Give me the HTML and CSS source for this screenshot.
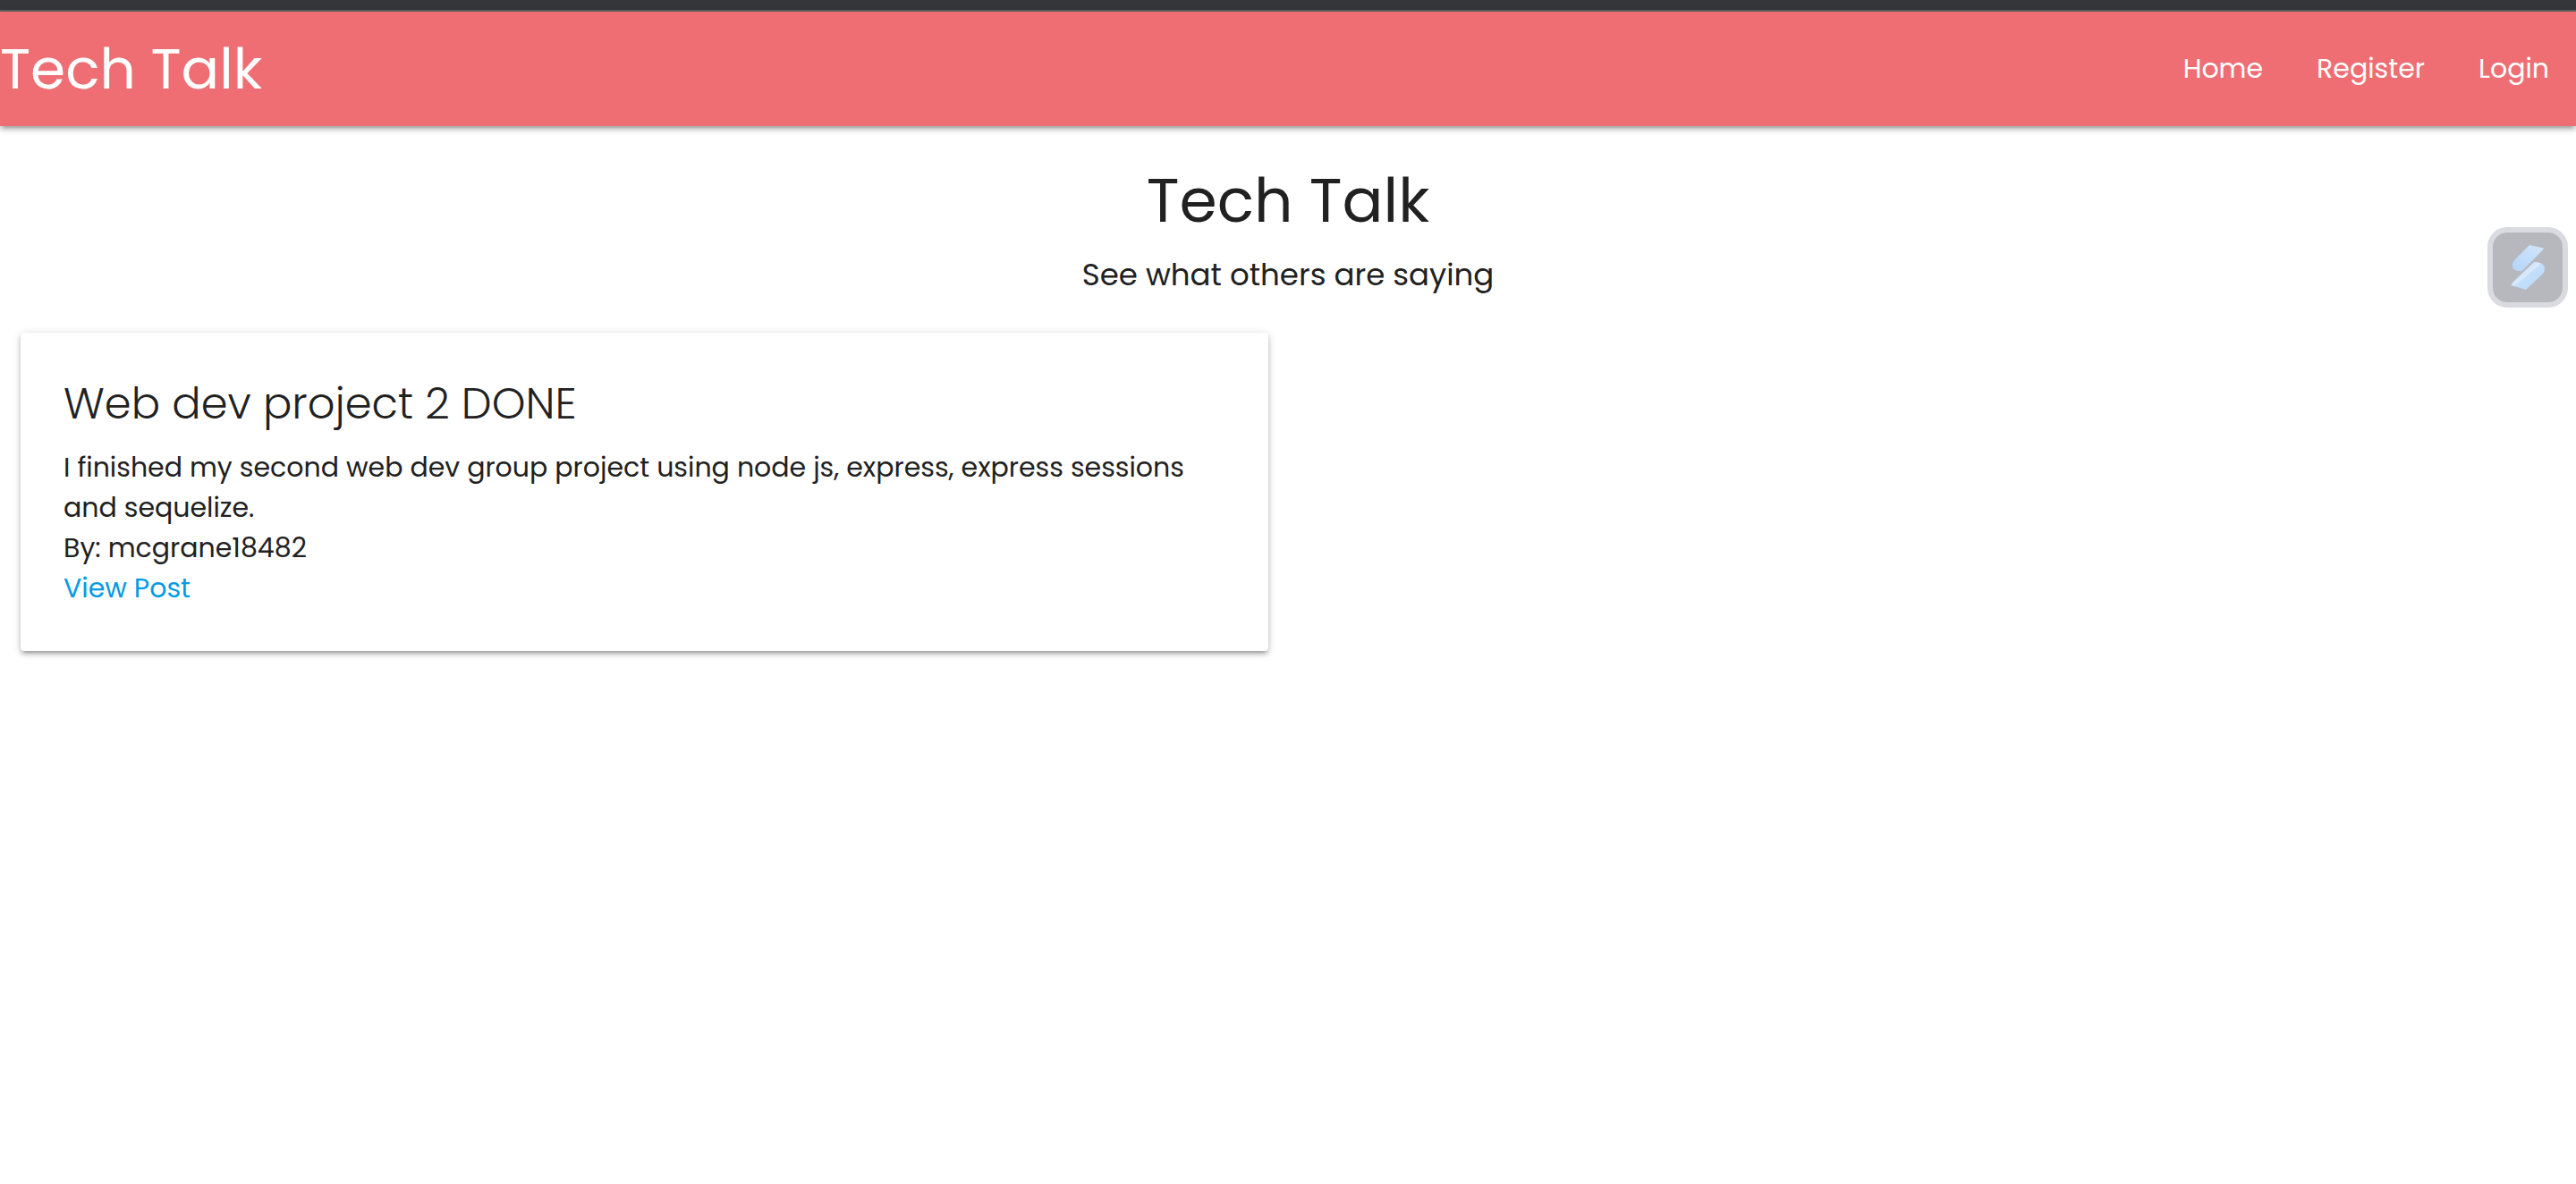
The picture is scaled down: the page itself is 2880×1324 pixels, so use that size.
FILE: index.html
```html
<!DOCTYPE html>
<html lang="en">
<head>
<meta charset="utf-8">
<meta name="viewport" content="width=device-width, initial-scale=1">
<title>Tech Talk</title>
<link rel="stylesheet" href="styles.css">
</head>
<body>
<div class="window-edge"></div>
<nav class="navbar">
  <a class="brand" href="#">Tech Talk</a>
  <ul class="nav-links">
    <li><a href="#">Home</a></li>
    <li><a href="#">Register</a></li>
    <li><a href="#">Login</a></li>
  </ul>
</nav>
<main>
  <header class="intro">
    <h1>Tech Talk</h1>
    <p>See what others are saying</p>
  </header>
  <section class="posts">
    <article class="card">
      <h2>Web dev project 2 DONE</h2>
      <p>I finished my second web dev group project using node js, express, express sessions and sequelize.</p>
      <p>By: mcgrane18482</p>
      <a href="#">View Post</a>
    </article>
  </section>
</main>
<button class="assistant" type="button" aria-label="Open assistant">
  <svg viewBox="0 0 78 78" aria-hidden="true">
    <defs>
      <linearGradient id="upper" x1="1" y1="0" x2="0" y2="1">
        <stop offset="0" stop-color="#d2e6fa"/>
        <stop offset="1" stop-color="#b4d4f8"/>
      </linearGradient>
      <linearGradient id="lower" x1="0.2" y1="0.2" x2="0.8" y2="0.8">
        <stop offset="0" stop-color="#bddbf8"/>
        <stop offset="0.42" stop-color="#d9eafc"/>
        <stop offset="0.5" stop-color="#c3dffb"/>
        <stop offset="1" stop-color="#bcdafb"/>
      </linearGradient>
    </defs>
    <path fill="url(#upper)" d="M41 14 57 17.500Q56 19.500 54 21.500L32 43.500Q23 43 22 38.500 21 34 25 30Z"/>
    <path fill="url(#lower)" d="M46 33Q55 33 57.500 38 59 43 55 47L37 64 20.500 59Q21 57 23 55Z"/>
  </svg>
</button>
</body>
</html>
```
FILE: styles.css
```css
* {
  box-sizing: border-box;
}

body {
  min-height: 100vh;
  margin: 0;
  background: #fff;
  color: #212121;
  font-family: Poppins, Inter, "Open Sans", sans-serif;
  font-size: 30px;
  line-height: 45px;
}

h1,
h2,
p,
ul {
  margin: 0;
}

a {
  color: #039be5;
  text-decoration: none;
}

.window-edge {
  height: 13px;
  background: #35363a;
  border-bottom: 2px solid #5f6063;
}

.navbar {
  display: flex;
  align-items: center;
  justify-content: space-between;
  height: 128px;
  background: #ee6e73;
  box-shadow: 0 4px 4px 0 rgba(0, 0, 0, 0.14), 0 6px 2px -4px rgba(0, 0, 0, 0.12), 0 2px 10px 0 rgba(0, 0, 0, 0.2);
}

.navbar a {
  color: #fff;
}

.brand {
  font-size: 63px;
  line-height: 128px;
}

.nav-links {
  display: flex;
  padding: 0;
  list-style: none;
}

.nav-links a {
  display: block;
  padding: 0 30px;
  line-height: 128px;
}

.intro {
  padding: 44px 24px 0;
  text-align: center;
}

.intro h1 {
  font-size: 68px;
  font-weight: 400;
  line-height: 80px;
}

.intro p {
  padding-top: 15px;
  font-size: 34px;
  line-height: 54px;
}

.posts {
  display: grid;
  grid-template-columns: 1fr 1fr;
  gap: 45px;
  padding: 38px 22px 24px 23px;
}

.card {
  padding: 48px;
  border-radius: 4px;
  background: #fff;
  box-shadow: 0 4px 4px 0 rgba(0, 0, 0, 0.14), 0 6px 2px -4px rgba(0, 0, 0, 0.12), 0 2px 10px 0 rgba(0, 0, 0, 0.2);
}

.card h2 {
  margin-bottom: 16px;
  font-size: 48px;
  font-weight: 300;
  line-height: 64px;
}

.assistant {
  position: fixed;
  top: 254px;
  right: 9px;
  width: 90px;
  height: 90px;
  padding: 0;
  border: 6px solid #dadbe0;
  border-radius: 22px;
  background: #b7b8be;
}

.assistant svg {
  display: block;
  width: 78px;
  height: 78px;
}
```
